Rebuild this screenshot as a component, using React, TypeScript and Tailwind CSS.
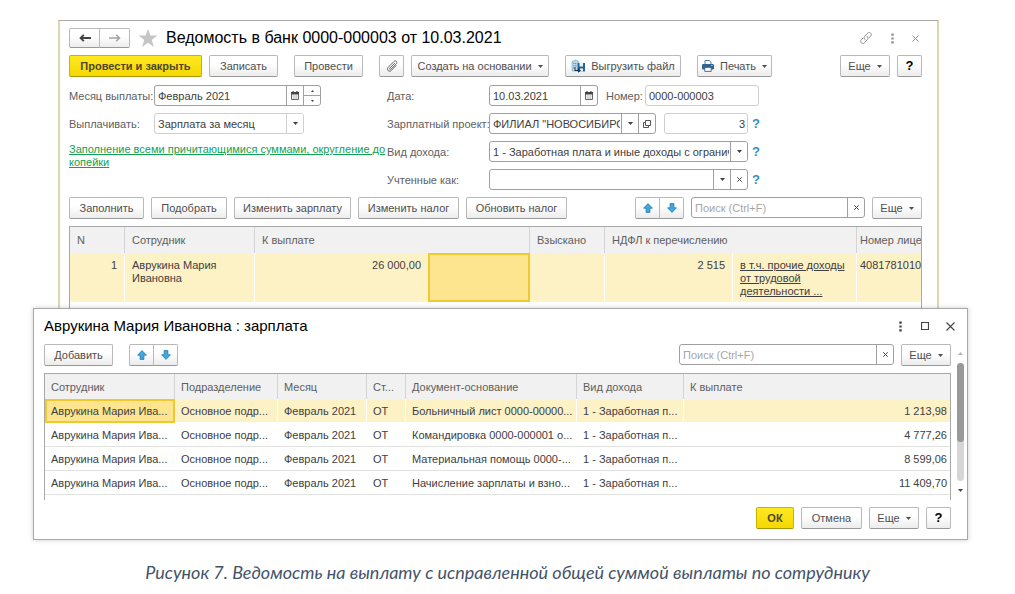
import type { ReactNode } from "react";
import clsx from "clsx";

type ButtonProps = {
  children: ReactNode;
  className?: string;
  primary?: boolean;
  menu?: boolean;
  label?: string;
};

type PaymentRow = {
  employee: string;
  department: string;
  month: string;
  item: string;
  document: string;
  income: string;
  amount: string;
};

const payments: PaymentRow[] = [
  { employee: "Аврукина Мария Ива...", department: "Основное подр...", month: "Февраль 2021", item: "ОТ", document: "Больничный лист 0000-00000...", income: "1 - Заработная п...", amount: "1 213,98" },
  { employee: "Аврукина Мария Ива...", department: "Основное подр...", month: "Февраль 2021", item: "ОТ", document: "Командировка 0000-000001 о...", income: "1 - Заработная п...", amount: "4 777,26" },
  { employee: "Аврукина Мария Ива...", department: "Основное подр...", month: "Февраль 2021", item: "ОТ", document: "Материальная помощь 0000-...", income: "1 - Заработная п...", amount: "8 599,06" },
  { employee: "Аврукина Мария Ива...", department: "Основное подр...", month: "Февраль 2021", item: "ОТ", document: "Начисление зарплаты и взно...", income: "1 - Заработная п...", amount: "11 409,70" },
];

function Caret({ up }: { up?: boolean }) {
  return (
    <svg width="5" height="3" viewBox="0 0 5 3" className="shrink-0" aria-hidden="true">
      <path d={up ? "M0 3 2.5 0 5 3z" : "M0 0h5L2.5 3z"} fill="currentColor" />
    </svg>
  );
}

function Button({ children, className, primary, menu, label }: ButtonProps) {
  return (
    <button
      type="button"
      aria-label={label}
      className={clsx(
        "flex h-[22px] shrink-0 items-center justify-center gap-1.5 whitespace-nowrap rounded-[2px] border bg-linear-to-b",
        primary
          ? "border-[#c9b200] border-b-[#a89500] from-[#ffe81f] to-[#f5d800] font-bold text-[#4d4726]"
          : "border-[#b9b9b9] border-b-[#989898] from-white from-40% to-[#ececec] text-[#4f4f4f]",
        className,
      )}
    >
      {children}
      {menu && <Caret />}
    </button>
  );
}

function BlueArrow({ down }: { down?: boolean }) {
  return (
    <svg width="10" height="10" viewBox="0 0 10 10" className={clsx(down && "rotate-180")} aria-hidden="true">
      <path d="M5 .6 9.4 5.2H6.9v4.2H3.1V5.2H.6z" fill="#3fa9e0" stroke="#2379ad" strokeWidth=".8" strokeLinejoin="round" />
    </svg>
  );
}

function MoveButtons() {
  return (
    <div className="flex">
      <Button label="Переместить вверх" className="w-[25px] rounded-r-none">
        <BlueArrow />
      </Button>
      <Button label="Переместить вниз" className="-ml-px w-[25px] rounded-l-none">
        <BlueArrow down />
      </Button>
    </div>
  );
}

function CalendarIcon() {
  return (
    <svg width="8" height="9" viewBox="0 0 8 9" aria-hidden="true">
      <path d="M.5 1.5h7v7h-7z" fill="#fff" stroke="#666" />
      <path d="M0 1h8v2.4H0zM1.5 0h1.2v2H1.5zM5.3 0h1.2v2H5.3z" fill="#444" />
      <path d="M1.7 4.6h1v1h-1zM3.5 4.6h1v1h-1zM5.3 4.6h1v1h-1zM1.7 6.4h1v1h-1zM3.5 6.4h1v1h-1zM5.3 6.4h1v1h-1z" fill="#777" />
    </svg>
  );
}

function CrossIcon() {
  return (
    <svg width="5" height="5" viewBox="0 0 5 5" aria-hidden="true">
      <path d="m.3.3 4.4 4.4M4.7.3.3 4.7" stroke="currentColor" strokeWidth="1" />
    </svg>
  );
}

function DotsIcon() {
  return (
    <svg width="3" height="11" viewBox="0 0 3 11" aria-hidden="true">
      <path d="M.3.5h2.4v2.2H.3zM.3 4.4h2.4v2.2H.3zM.3 8.3h2.4v2.2H.3z" fill="currentColor" />
    </svg>
  );
}

// Frame shared by every input that carries side buttons
function Field({ children, className, light }: { children: ReactNode; className?: string; light?: boolean }) {
  return (
    <div
      className={clsx(
        "flex h-[21px] overflow-hidden rounded-[3px] border bg-white",
        light ? "border-[#cfcfcf]" : "border-[#a0a0a0]",
        className,
      )}
    >
      {children}
    </div>
  );
}

function SideButton({ children, label }: { children: ReactNode; label: string }) {
  return (
    <button type="button" aria-label={label} className="flex w-[17px] shrink-0 items-center justify-center border-l border-[#a0a0a0]">
      {children}
    </button>
  );
}

function SelectBox({ id, value, light }: { id: string; value: string; light?: boolean }) {
  return (
    <div className="relative flex min-w-0 flex-1">
      <select id={id} className="w-full min-w-0 appearance-none overflow-hidden pl-[3px] pr-[18px] outline-none">
        <option>{value}</option>
      </select>
      <span
        className={clsx(
          "pointer-events-none absolute inset-y-0 right-0 flex w-[17px] items-center justify-center border-l bg-white",
          light ? "border-[#cfcfcf]" : "border-[#a0a0a0]",
        )}
      >
        <Caret />
      </span>
    </div>
  );
}

function Search({ id, className }: { id: string; className?: string }) {
  return (
    <Field className={className}>
      <input
        id={id}
        type="text"
        aria-label="Поиск"
        placeholder="Поиск (Ctrl+F)"
        className="min-w-0 flex-1 px-[3px] outline-none placeholder:text-[#a6a6a6]"
      />
      <SideButton label="Очистить поиск">
        <CrossIcon />
      </SideButton>
    </Field>
  );
}

function Help() {
  return (
    <a href="#help" className="ml-1 text-[13px] font-bold text-[#2f8fc8]">
      ?
    </a>
  );
}

function PaperclipIcon() {
  return (
    <svg width="12" height="12" viewBox="0 0 12 12" fill="none" stroke="#666" strokeWidth="1" strokeLinecap="round" aria-hidden="true">
      <path d="m8.5 3.4-4.7 4.8c-.8.8.3 1.8 1 1.1l5.3-5.4c1.9-1.9-.4-4.2-2.3-2.3L2.3 7.2c-2.4 2.5.8 5.5 3.1 3.2l4.7-4.8" />
    </svg>
  );
}

function ExportIcon() {
  return (
    <svg width="14" height="14" viewBox="0 0 14 14" aria-hidden="true">
      <path d="M1 2.5 4.5.8 8 2.5V12H1z" fill="#b9d6e8" stroke="#7ba7c4" strokeWidth=".6" />
      <path d="M2.3 4h1v1h-1zM4.2 4h1v1h-1zM2.3 6.2h1v1h-1zM4.2 6.2h1v1h-1zM2.3 8.4h1v1h-1z" fill="#4a86ad" />
      <path d="M6.500 4H14v8.500H6.500z" fill="#2b6598" />
      <path d="M8.500 4h3.500v3.500H8.500zM9 9.500h3v3H9z" fill="#e6f1f8" />
      <path d="M4.500 8v3H7V9.300L10 11.500 7 13.700V12H3.500V8z" fill="#173650" />
    </svg>
  );
}

function PrinterIcon() {
  return (
    <svg width="12" height="12" viewBox="0 0 12 12" aria-hidden="true">
      <path d="M3 4.5V.5h4.3L9 2.2v2.3" fill="#fff" stroke="#3d6d96" strokeWidth=".9" />
      <rect x="0" y="4" width="12" height="5.5" rx="1.2" fill="#34658f" />
      <path d="M2.8 7.4h6.4v4H2.8z" fill="#fff" stroke="#34658f" strokeWidth=".9" />
      <path d="M9.3 5.2h1.2v.9H9.3z" fill="#fff" />
    </svg>
  );
}

function DocumentHeader() {
  return (
    <header className="flex h-5 items-center">
      <div className="flex">
        <button type="button" aria-label="Назад" className="flex h-5 w-[31px] items-center justify-center rounded-l-[2px] border border-[#b9b9b9] border-b-[#989898] bg-linear-to-b from-white from-40% to-[#ececec] text-[#444]">
          <svg width="12" height="8" viewBox="0 0 12 8" aria-hidden="true">
            <path d="M12 4H1.500M4.800.8 1.600 4l3.200 3.200" fill="none" stroke="currentColor" strokeWidth="1.900" />
          </svg>
        </button>
        <button type="button" aria-label="Вперед" className="-ml-px flex h-5 w-[31px] items-center justify-center rounded-r-[2px] border border-[#b9b9b9] border-b-[#989898] bg-linear-to-b from-white from-40% to-[#ececec] text-[#a3a3a3]">
          <svg width="12" height="8" viewBox="0 0 12 8" aria-hidden="true">
            <path d="M0 4h10.500M7.200.8 10.400 4 7.200 7.200" fill="none" stroke="currentColor" strokeWidth="1.600" />
          </svg>
        </button>
      </div>
      <button type="button" aria-label="В избранное" className="ml-2">
        <svg width="20" height="18" viewBox="0 0 20 18" aria-hidden="true">
          <path d="m10 0 2.400 6.600h7L13.800 10.900l2.100 7L10 13.800 4.100 17.900l2.100-7L.6 6.600h7z" fill="#c6c6c6" />
        </svg>
      </button>
      <h1 className="ml-2 text-[16px] text-black">Ведомость в банк 0000-000003 от 10.03.2021</h1>
      <div className="ml-auto flex items-center gap-4 pr-[3px] text-[#8f8f8f]">
        <button type="button" aria-label="Получить ссылку">
          <svg width="14" height="14" viewBox="0 0 14 14" fill="none" stroke="currentColor" strokeWidth="1" strokeLinecap="round" aria-hidden="true">
            <path d="M5.900 8.600c-1.100-.9-1.200-2.200-.3-3.200l3-3.200c2-2 5 .8 3.100 2.900L10.100 6.800M8.100 5.400c1.100.9 1.200 2.200.3 3.200l-3 3.200c-2 2-5-.8-3.100-2.900L3.900 7.200" />
          </svg>
        </button>
        <button type="button" aria-label="Меню" className="px-[2px]">
          <DotsIcon />
        </button>
        <button type="button" aria-label="Закрыть">
          <svg width="7" height="7" viewBox="0 0 7 7" aria-hidden="true">
            <path d="m.5.5 6 6m0-6-6 6" stroke="currentColor" />
          </svg>
        </button>
      </div>
    </header>
  );
}

function DocumentForm() {
  return (
    <div className="mt-2 flex items-start">
      <div className="w-[318px] shrink-0">
        <div className="flex items-center">
          <label htmlFor="month" className="w-[85px] shrink-0 whitespace-nowrap text-[#5e5e5e]">Месяц выплаты:</label>
          <Field className="w-[167px]">
            <input id="month" type="text" defaultValue="Февраль 2021" className="min-w-0 flex-1 px-[3px] outline-none" />
            <SideButton label="Выбрать месяц">
              <CalendarIcon />
            </SideButton>
            <div className="flex w-[17px] flex-col border-l border-[#a0a0a0]">
              <button type="button" aria-label="Следующий месяц" className="flex flex-1 items-center justify-center border-b border-[#a0a0a0]">
                <svg width="3" height="2" viewBox="0 0 3 2" aria-hidden="true"><path d="M0 2 1.500 0 3 2z" fill="#444" /></svg>
              </button>
              <button type="button" aria-label="Предыдущий месяц" className="flex flex-1 items-center justify-center">
                <svg width="3" height="2" viewBox="0 0 3 2" aria-hidden="true"><path d="M0 0h3L1.500 2z" fill="#444" /></svg>
              </button>
            </div>
          </Field>
        </div>
        <div className="mt-[7px] flex items-center">
          <label htmlFor="kind" className="w-[85px] shrink-0 text-[#5e5e5e]">Выплачивать:</label>
          <Field light className="w-[150px]">
            <SelectBox id="kind" value="Зарплата за месяц" light />
          </Field>
        </div>
        <a href="#filling" className="mt-[9px] block leading-[13px] text-[#12a150] underline">
          Заполнение всеми причитающимися суммами, округление до копейки
        </a>
      </div>

      <div className="flex min-w-0 flex-col gap-[7px]">
        <div className="flex items-center">
          <label htmlFor="date" className="w-[102px] shrink-0 text-[#5e5e5e]">Дата:</label>
          <Field className="w-[109px]">
            <input id="date" type="text" defaultValue="10.03.2021" className="min-w-0 flex-1 px-[3px] outline-none" />
            <SideButton label="Выбрать дату">
              <CalendarIcon />
            </SideButton>
          </Field>
          <label htmlFor="number" className="ml-2 w-[39px] whitespace-nowrap text-[#5e5e5e]">Номер:</label>
          <Field light className="w-[114px]">
            <input id="number" type="text" defaultValue="0000-000003" className="min-w-0 flex-1 px-[3px] outline-none" />
          </Field>
        </div>
        <div className="flex items-center">
          <label htmlFor="project" className="w-[102px] shrink-0 whitespace-nowrap text-[#5e5e5e]">Зарплатный проект:</label>
          <Field className="w-[167px]">
            <SelectBox id="project" value={'ФИЛИАЛ "НОВОСИБИРСКИЙ"'} />
            <SideButton label="Открыть проект">
              <svg width="8" height="8" viewBox="0 0 8 8" fill="none" stroke="#555" aria-hidden="true">
                <path d="M2.500.5h5v5h-5zM2.500 2.500h-2v5h5v-2" />
              </svg>
            </SideButton>
          </Field>
          <Field light className="ml-2 w-[84px]">
            <input type="text" aria-label="Номер реестра" defaultValue="3" className="min-w-0 flex-1 px-[2px] text-right outline-none" />
          </Field>
          <Help />
        </div>
        <div className="flex items-center">
          <label htmlFor="income" className="w-[102px] shrink-0 text-[#5e5e5e]">Вид дохода:</label>
          <Field className="w-[259px]">
            <SelectBox id="income" value="1 - Заработная плата и иные доходы с ограничением взыскания" />
          </Field>
          <Help />
        </div>
        <div className="flex items-center">
          <label htmlFor="counted" className="w-[102px] shrink-0 text-[#5e5e5e]">Учтенные как:</label>
          <Field className="w-[259px]">
            <SelectBox id="counted" value="" />
            <SideButton label="Очистить">
              <CrossIcon />
            </SideButton>
          </Field>
          <Help />
        </div>
      </div>
    </div>
  );
}

function EmployeeTable() {
  const head = "border-r border-[#d4d4d4] px-[7px] font-normal";
  const cell = "border-r border-white px-[7px] pt-[6px] align-top";
  return (
    <div className="mt-[7px] overflow-hidden border-x border-t border-[#a8a8a8] pb-[6px]">
      <table className="w-full table-fixed border-separate border-spacing-0 leading-[13px]">
        <colgroup>
          <col className="w-[55px]" />
          <col className="w-[130px]" />
          <col className="w-[173px]" />
          <col className="w-[102px]" />
          <col className="w-[75px]" />
          <col className="w-[128px]" />
          <col className="w-[124px]" />
          <col />
        </colgroup>
        <thead>
          <tr className="h-[26px] bg-[#f1f1f1] text-left text-[#5e5e5e]">
            <th className={head}>N</th>
            <th className={head}>Сотрудник</th>
            <th colSpan={2} className={head}>К выплате</th>
            <th className={head}>Взыскано</th>
            <th colSpan={2} className={head}>НДФЛ к перечислению</th>
            <th className="whitespace-nowrap pl-[3px] font-normal">Номер лице</th>
          </tr>
        </thead>
        <tbody>
          <tr className="h-[49px] bg-[#fdf1c6]">
            <td className={clsx(cell, "text-right")}>1</td>
            <td className={cell}>Аврукина Мария Ивановна</td>
            <td className={clsx(cell, "border-r-0 text-right")}>26 000,00</td>
            <td className="border-2 border-[#efc92f] bg-[#fde58f]" />
            <td className={cell} />
            <td className={clsx(cell, "text-right")}>2 515</td>
            <td className="whitespace-nowrap border-r border-white pl-[7px] pt-[6px] align-top">
              <a href="#other-income" className="underline">
                в т.ч. прочие доходы
                <br />
                от трудовой
                <br />
                деятельности ...
              </a>
            </td>
            <td className="whitespace-nowrap pl-[3px] pt-[6px] align-top">4081781010</td>
          </tr>
        </tbody>
      </table>
    </div>
  );
}

function DocumentWindow() {
  return (
    <section className="ml-[58px] mr-[76px] border-x-2 border-t border-x-[#dcd7ad] border-t-[#a8a8a8] bg-white pl-[9px] pr-[15px] pt-[7px]">
      <DocumentHeader />
      <div className="mt-[7px] flex">
        <Button primary className="w-[133px]">Провести и закрыть</Button>
        <Button className="ml-[7px] w-[69px]">Записать</Button>
        <Button className="ml-4 w-[69px]">Провести</Button>
        <Button label="Присоединенные файлы" className="ml-4 w-[25px]">
          <PaperclipIcon />
        </Button>
        <Button menu className="ml-[7px] w-[138px]">Создать на основании</Button>
        <Button className="ml-4 w-[116px]">
          <ExportIcon />
          Выгрузить файл
        </Button>
        <Button menu className="ml-4 w-[75px]">
          <PrinterIcon />
          Печать
        </Button>
        <div className="ml-auto flex gap-[7px]">
          <Button menu className="w-[50px]">Еще</Button>
          <Button className="w-[25px]">
            <b className="text-[13px] text-black">?</b>
          </Button>
        </div>
      </div>
      <DocumentForm />
      <div className="mt-[7px] flex gap-[7px]">
        <Button className="w-[75px]">Заполнить</Button>
        <Button className="w-[76px]">Подобрать</Button>
        <Button className="w-[117px]">Изменить зарплату</Button>
        <Button className="w-[101px]">Изменить налог</Button>
        <Button className="w-[101px]">Обновить налог</Button>
        <div className="ml-auto flex gap-[7px]">
          <MoveButtons />
          <Search id="document-search" className="w-[174px]" />
          <Button menu className="w-[50px]">Еще</Button>
        </div>
      </div>
      <EmployeeTable />
    </section>
  );
}

function PaymentTable() {
  const head = "border-r border-[#d4d4d4] px-[6px] font-normal";
  const cell = "whitespace-nowrap border-b px-[6px]";
  return (
    <div className="mt-[7px] overflow-hidden border-x border-t border-[#a8a8a8] pb-[5px]">
      <table className="w-full table-fixed border-separate border-spacing-0">
        <colgroup>
          <col className="w-[130px]" />
          <col className="w-[103px]" />
          <col className="w-[89px]" />
          <col className="w-[39px]" />
          <col className="w-[171px]" />
          <col className="w-[107px]" />
          <col />
        </colgroup>
        <thead>
          <tr className="h-[25px] bg-[#f1f1f1] text-left text-[#5e5e5e]">
            <th className={head}>Сотрудник</th>
            <th className={head}>Подразделение</th>
            <th className={head}>Месяц</th>
            <th className={head}>Ст...</th>
            <th className={head}>Документ-основание</th>
            <th className={head}>Вид дохода</th>
            <th className="px-[6px] font-normal">К выплате</th>
          </tr>
        </thead>
        <tbody>
          {payments.map((row, i) => {
            const line = i === 0 ? "border-r border-r-white border-b-white" : "border-b-[#e2e2e2]";
            return (
              <tr key={row.document} className={clsx("h-6", i === 0 && "bg-[#fdf1c6]")}>
                <td className={i === 0 ? "whitespace-nowrap border-2 border-[#efc92f] bg-[#fde58f] px-1" : clsx(cell, line)}>{row.employee}</td>
                <td className={clsx(cell, line)}>{row.department}</td>
                <td className={clsx(cell, line)}>{row.month}</td>
                <td className={clsx(cell, line)}>{row.item}</td>
                <td className={clsx(cell, line)}>{row.document}</td>
                <td className={clsx(cell, line)}>{row.income}</td>
                <td className={clsx("whitespace-nowrap border-b pr-[3px] text-right", i === 0 ? "border-white" : "border-[#e2e2e2]")}>{row.amount}</td>
              </tr>
            );
          })}
        </tbody>
      </table>
    </div>
  );
}

function SalaryDialog() {
  return (
    <section
      role="dialog"
      aria-labelledby="dialog-title"
      className="relative ml-[33px] mr-[47px] border border-[#a8a8a8] bg-white pb-[10px] pl-[10px] pt-[7px] shadow-[0_0_5px_rgba(0,0,0,0.2)]"
    >
      <header className="flex h-5 items-center pr-3">
        <h2 id="dialog-title" className="text-[15px] text-black">Аврукина Мария Ивановна : зарплата</h2>
        <div className="ml-auto flex items-center gap-[17px] text-[#444]">
          <button type="button" aria-label="Меню" className="px-[2px]">
            <DotsIcon />
          </button>
          <button type="button" aria-label="Развернуть">
            <svg width="8" height="8" viewBox="0 0 8 8" aria-hidden="true">
              <path d="M.5.5h7v7h-7z" fill="none" stroke="currentColor" strokeWidth="1.200" />
            </svg>
          </button>
          <button type="button" aria-label="Закрыть">
            <svg width="9" height="9" viewBox="0 0 9 9" aria-hidden="true">
              <path d="m.5.5 8 8m0-8-8 8" stroke="currentColor" strokeWidth="1.100" />
            </svg>
          </button>
        </div>
      </header>
      <div className="mt-2 flex">
        <div className="min-w-0 flex-1">
          <div className="flex">
            <Button className="w-[69px]">Добавить</Button>
            <div className="ml-4">
              <MoveButtons />
            </div>
            <div className="ml-auto flex gap-[7px]">
              <Search id="payment-search" className="w-[215px]" />
              <Button menu className="w-[50px]">Еще</Button>
            </div>
          </div>
          <PaymentTable />
        </div>
        <div className="flex w-4 flex-col items-center gap-2 pb-2 pl-[2px] pt-2 text-[#444]">
          <span className="text-[#b5b5b5]">
            <svg width="5" height="3" viewBox="0 0 5 3" className="block" aria-hidden="true">
              <path d="M0 3 2.500 0 5 3z" fill="currentColor" />
            </svg>
          </span>
          <div className="w-[7px] flex-1 rounded-full bg-[#d6d6d6]">
            <div className="h-2/3 rounded-full bg-[#999]" />
          </div>
          <Caret />
        </div>
      </div>
      <footer className="mt-[7px] flex justify-end gap-[7px] pr-4">
        <Button primary className="w-[38px]">ОК</Button>
        <Button className="w-[61px]">Отмена</Button>
        <Button menu className="w-[50px]">Еще</Button>
        <Button className="w-[25px]">
          <b className="text-[13px] text-black">?</b>
        </Button>
      </footer>
    </section>
  );
}

export default function App() {
  return (
    <main className="bg-white pb-1 pt-5 font-['Liberation_Sans',Arial,sans-serif] text-[11px] leading-4 text-[#404040]">
      <DocumentWindow />
      <SalaryDialog />
      <p className="mt-5 text-center font-[Lato,sans-serif] text-[18px] italic leading-6 text-[#44546a]">
        Рисунок 7. Ведомость на выплату с исправленной общей суммой выплаты по сотруднику
      </p>
    </main>
  );
}
